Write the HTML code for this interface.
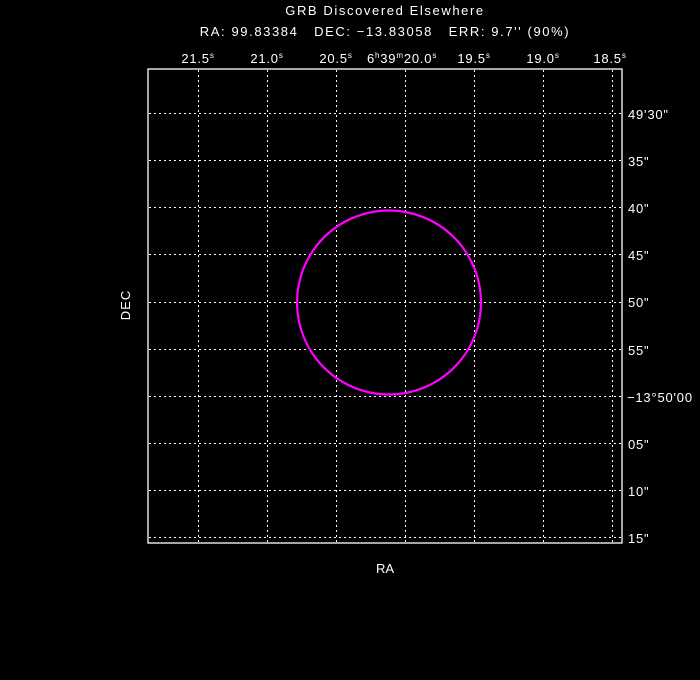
<!DOCTYPE html>
<html><head><style>
html,body{margin:0;padding:0;background:#000;width:700px;height:680px;overflow:hidden}
svg{display:block}
text{font-family:"Liberation Sans",sans-serif;fill:#fff;font-size:13px;white-space:pre}
</style></head><body>
<svg width="700" height="680" xmlns="http://www.w3.org/2000/svg">
<text x="385" y="15" text-anchor="middle" font-size="16" letter-spacing="1.6" xml:space="preserve">GRB Discovered Elsewhere</text>
<text x="385" y="36" text-anchor="middle" font-size="16" letter-spacing="1.6" xml:space="preserve">RA: 99.83384   DEC: −13.83058   ERR: 9.7'' (90%)</text>
<g font-size="13" letter-spacing="0.8">
<text x="198" y="63" text-anchor="middle">21.5<tspan dy="-5" font-size="8">s</tspan></text>
<text x="267" y="63" text-anchor="middle">21.0<tspan dy="-5" font-size="8">s</tspan></text>
<text x="336" y="63" text-anchor="middle">20.5<tspan dy="-5" font-size="8">s</tspan></text>
<text x="367" y="63">6<tspan dy="-5" font-size="8">h</tspan><tspan dy="5">39</tspan><tspan dy="-5" font-size="8">m</tspan><tspan dy="5">20.0</tspan><tspan dy="-5" font-size="8">s</tspan></text>
<text x="474" y="63" text-anchor="middle">19.5<tspan dy="-5" font-size="8">s</tspan></text>
<text x="543" y="63" text-anchor="middle">19.0<tspan dy="-5" font-size="8">s</tspan></text>
<text x="610" y="63" text-anchor="middle">18.5<tspan dy="-5" font-size="8">s</tspan></text>
<text x="628" y="119">49'30"</text>
<text x="628" y="166">35"</text>
<text x="628" y="213">40"</text>
<text x="628" y="260">45"</text>
<text x="628" y="307">50"</text>
<text x="628" y="355">55"</text>
<text x="627" y="402">−13°50'00</text>
<text x="628" y="449">05"</text>
<text x="628" y="496">10"</text>
<text x="628" y="543">15"</text>
</g>
<text x="385" y="573" text-anchor="middle" font-size="15">RA</text>
<text transform="translate(130,305) rotate(-90)" text-anchor="middle" font-size="15" letter-spacing="1">DEC</text>
<g stroke="#fff" stroke-width="1" stroke-dasharray="2,3">
<line x1="198.5" y1="70" x2="198.5" y2="542"/><line x1="267.5" y1="70" x2="267.5" y2="542"/>
<line x1="336.5" y1="70" x2="336.5" y2="542"/><line x1="405.5" y1="70" x2="405.5" y2="542"/>
<line x1="474.5" y1="70" x2="474.5" y2="542"/><line x1="543.5" y1="70" x2="543.5" y2="542"/>
<line x1="612.5" y1="70" x2="612.5" y2="542"/>
<line x1="149" y1="113.5" x2="621" y2="113.5"/><line x1="149" y1="160.5" x2="621" y2="160.5"/>
<line x1="149" y1="207.5" x2="621" y2="207.5"/><line x1="149" y1="254.5" x2="621" y2="254.5"/>
<line x1="149" y1="302.5" x2="621" y2="302.5"/><line x1="149" y1="349.5" x2="621" y2="349.5"/>
<line x1="149" y1="396.5" x2="621" y2="396.5"/><line x1="149" y1="443.5" x2="621" y2="443.5"/>
<line x1="149" y1="490.5" x2="621" y2="490.5"/><line x1="149" y1="537.5" x2="621" y2="537.5"/>
</g>
<rect x="148" y="69" width="474" height="474" fill="none" stroke="#fff" stroke-width="1.3"/>
<circle cx="389" cy="302.5" r="92" fill="none" stroke="#ff00ff" stroke-width="2.2"/>
</svg>
</body></html>
